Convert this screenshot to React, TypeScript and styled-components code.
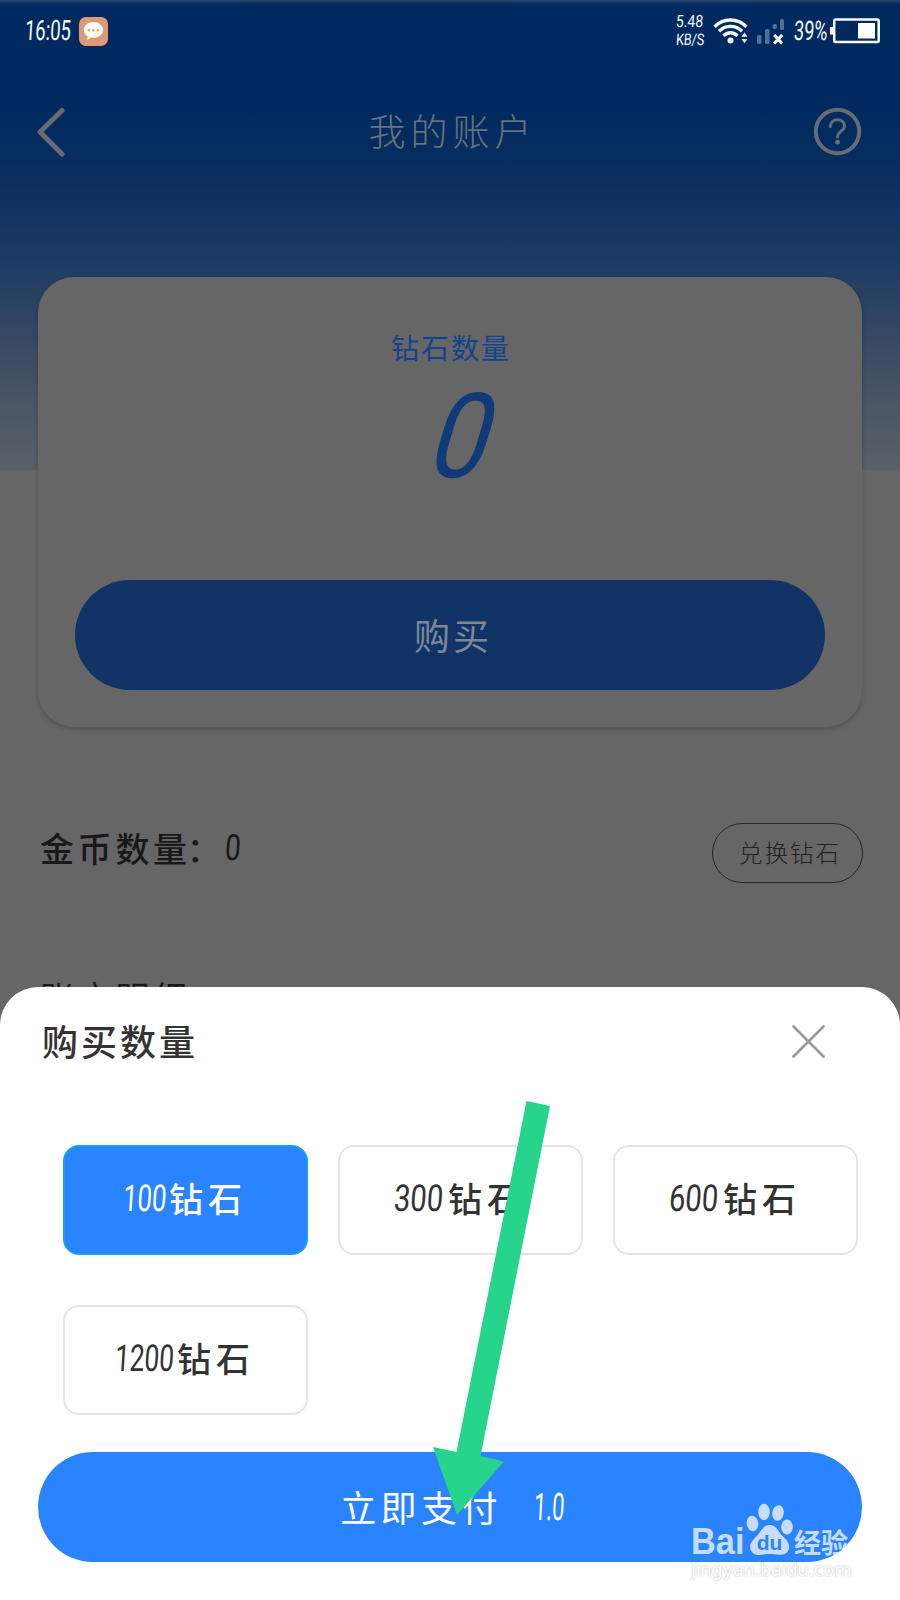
import React from "react";
import styled, { createGlobalStyle } from "styled-components";

const GlobalStyle = createGlobalStyle`
  * { box-sizing: border-box; }
  html, body { margin: 0; padding: 0; }
  body {
    width: 900px;
    height: 1600px;
    overflow: hidden;
    background: #666;
    font-family: "Noto Sans CJK SC", sans-serif;
  }
  button { font-family: inherit; padding: 0; margin: 0; border: 0; background: none; }
`;

const Screen = styled.div`
  position: relative;
  width: 900px;
  height: 1600px;
  overflow: hidden;
  display: flex;
  flex-direction: column;
  background: linear-gradient(
      #2a4568 0, #002a5f 4px, #002a5f 110px, #0b2f60 180px, #1c3b63 260px,
      #374963 340px, #4b5664 405px, #5a6067 470px
    )
    top / 100% 470px no-repeat #666;
`;

/* Condensed, slanted numerals; the box keeps the condensed width. */
const Numerals = styled.span<{ $size: number; $width: number; $squeeze: number; $slant?: number; $weight?: number }>`
  display: inline-block;
  flex: none;
  width: ${(p) => p.$width}px;
  font-family: Roboto, "Noto Sans", sans-serif;
  font-size: ${(p) => p.$size}px;
  font-weight: ${(p) => p.$weight ?? 400};
  line-height: 1;
  letter-spacing: 0;
  white-space: nowrap;
  transform-origin: left center;
  transform: scaleX(${(p) => p.$squeeze}) skewX(${(p) => -(p.$slant ?? 5)}deg);
`;

const StatusBar = styled.header`
  display: flex;
  align-items: center;
  justify-content: space-between;
  height: 62px;
  padding: 0 20px 0 25px;
  color: #f4fbff;
`;

const StatusGroup = styled.div`
  display: flex;
  align-items: center;
`;

const SignalSlot = styled.div`
  display: flex;
  padding: 0 9px 0 8px;
`;

const Speed = styled.div`
  display: flex;
  flex-direction: column;
  gap: 2px;
  width: 37px;
  padding-bottom: 1px;
`;

const NavBar = styled.nav`
  display: flex;
  align-items: center;
  justify-content: space-between;
  height: 139px;
  padding: 0 38px 0 36px;
`;

const NavTitle = styled.h1`
  margin: 0;
  padding: 0 0 2px 26px;
  color: #68727c;
  font-size: 37px;
  font-weight: 300;
  letter-spacing: 5px;
  line-height: 1;
`;

const BalanceCard = styled.section`
  display: flex;
  flex-direction: column;
  align-items: center;
  height: 450px;
  margin: 76px 38px 0 38px;
  padding: 53px 37px 37px;
  border-radius: 36px;
  background: #666;
  box-shadow: 0 2px 5px rgba(0, 0, 0, 0.22);
`;

const BalanceLabel = styled.div`
  padding-left: 2px;
  color: #12448b;
  font-size: 28px;
  font-weight: 400;
  letter-spacing: 2px;
  line-height: 34px;
`;

const BalanceValue = styled.div`
  display: flex;
  flex: 1;
  padding: 14px 0 0 4px;
  color: #113a78;
`;

const PillButton = styled.button<{ $dimmed?: boolean }>`
  display: flex;
  align-items: center;
  justify-content: center;
  width: 100%;
  height: 110px;
  flex: none;
  padding: ${(p) => (p.$dimmed ? "0 0 3px 6px" : "0 0 3px 2px")};
  border-radius: 55px;
  background: ${(p) => (p.$dimmed ? "#113366" : "#2a83ff")};
  color: ${(p) => (p.$dimmed ? "#7c8797" : "#fff")};
  font-size: 36px;
  line-height: 1;
  letter-spacing: ${(p) => (p.$dimmed ? 3 : 4.4)}px;
`;

const CoinRow = styled.section`
  display: flex;
  align-items: center;
  justify-content: space-between;
  height: 60px;
  margin-top: 96px;
  padding: 0 37px 0 40px;
`;

const CoinText = styled.div`
  display: flex;
  align-items: center;
  color: #191919;
  font-size: 34px;
  font-weight: 500;
  letter-spacing: 3.7px;
  line-height: 1;
  padding-bottom: 11px;
`;

const Colon = styled.span`
  width: 38px;
  margin-left: -4px;
`;

const ExchangeButton = styled.button`
  width: 151px;
  height: 60px;
  padding: 0 0 1px 5px;
  border: 1.5px solid #262626;
  border-radius: 30px;
  color: #222;
  font-size: 23.5px;
  font-weight: 300;
  letter-spacing: 2px;
  line-height: 1;
`;

const DetailHeading = styled.h2`
  margin: 94px 0 0 40px;
  color: #191919;
  font-size: 34px;
  font-weight: 400;
  letter-spacing: 3.7px;
  line-height: 40px;
`;

const Sheet = styled.section`
  position: absolute;
  inset: 987px 0 0;
  padding: 0 38px;
  border-radius: 38px 38px 0 0;
  background: #fff;
`;

const SheetHeader = styled.div`
  display: flex;
  align-items: center;
  justify-content: space-between;
  height: 108px;
  padding: 0 37px 0 4px;
`;

const SheetTitle = styled.h2`
  margin: 0;
  padding-bottom: 2px;
  color: #333;
  font-size: 36px;
  font-weight: 500;
  letter-spacing: 3px;
  line-height: 1;
`;

const Options = styled.div`
  display: grid;
  grid-template-columns: repeat(3, 245px);
  grid-auto-rows: 110px;
  gap: 50px 30px;
  padding: 50px 0 37px 24.5px;
`;

const Option = styled.button<{ $selected?: boolean }>`
  display: flex;
  align-items: center;
  justify-content: center;
  padding-bottom: 4px;
  border: 2px solid ${(p) => (p.$selected ? "#16a0f4" : "#e5e5e5")};
  border-radius: 16px;
  background: ${(p) => (p.$selected ? "#2a83ff" : "#fff")};
  color: ${(p) => (p.$selected ? "#fff" : "#333")};
  font-size: 34px;
  font-weight: 500;
  letter-spacing: 5px;
  line-height: 1;
`;

const Amount = styled.span`
  margin-left: 32px;
`;

const Arrow = styled.svg`
  position: absolute;
  left: 433px;
  top: 1101px;
`;

const Watermark = styled.div`
  position: absolute;
  left: 691px;
  top: 1503px;
  width: 164px;
  color: rgba(255, 255, 255, 0.74);
`;

const WatermarkBrand = styled.div`
  display: flex;
  align-items: flex-end;
  height: 53px;
`;

const Bai = styled.span`
  width: 54px;
  margin-bottom: -4px;
  font: 700 37px/36px "Liberation Sans", sans-serif;
  transform: scaleX(0.93);
  transform-origin: left;
`;

const Jingyan = styled.span`
  margin-bottom: 1px;
  font-size: 27px;
  font-weight: 700;
  line-height: 26px;
`;

const WatermarkUrl = styled.div`
  margin-top: 4px;
  font: 18px/20px "DejaVu Sans", sans-serif;
  letter-spacing: -0.35px;
  color: #fff;
  text-shadow: 0 0 2px rgba(0, 0, 0, 0.32);
  white-space: nowrap;
`;

const packs = [
  { count: "100", width: 46, squeeze: 0.7 },
  { count: "300", width: 54, squeeze: 0.79 },
  { count: "600", width: 54, squeeze: 0.79 },
  { count: "1200", width: 62, squeeze: 0.71 },
];

const ChatIcon = () => (
  <svg width="29" height="29" viewBox="0 0 29 29">
    <rect width="29" height="29" rx="7" fill="#dd9a76" />
    <path d="M14.4 5c5.400 0 9.600 3.500 9.600 8s-4.200 7.800-9.600 7.800c-.9 0-1.700-.1-2.500-.3-1 1.200-2.600 2.100-4.300 2.200.8-.9 1.200-1.900 1.100-3.200C6.300 18 4.800 15.700 4.800 13c0-4.500 4.200-8 9.600-8z" fill="#fffaf0" />
    <circle cx="9.700" cy="13.200" r="1.300" fill="#d8a587" />
    <circle cx="14.400" cy="13.200" r="1.300" fill="#d8a587" />
    <circle cx="19.100" cy="13.200" r="1.300" fill="#d8a587" />
  </svg>
);

const WifiIcon = () => (
  <svg width="36" height="27" viewBox="0 0 36 27" fill="none" stroke="#f4fbff" strokeWidth="3.400">
    <path d="M1.500 8.800C10.500-.2 24.500-.2 33.500 8.800" />
    <path d="M6 13.300c6.600-6.600 16.400-6.600 23 0" />
    <path d="M10.500 17.800c4-4 10-4 14 0" />
    <circle cx="17.500" cy="22.500" r="3" fill="#f4fbff" stroke="none" />
    <path d="M28.500 18.800l3-4.300 3 4.300zM28.500 21l3 4.300 3-4.300z" fill="#f4fbff" stroke="none" />
  </svg>
);

const SignalIcon = () => (
  <svg width="28" height="27" viewBox="0 0 28 27">
    <g fill="#4d6f9c">
      <rect x="0" y="17" width="4.500" height="9" rx="1.500" />
      <rect x="8" y="11" width="4.500" height="15" rx="1.500" />
      <rect x="15.500" y="6" width="4.500" height="5" rx="2" />
      <rect x="23" y="1" width="4" height="11" rx="1.500" />
    </g>
    <path d="M17.200 17l8 8.500M25.200 17l-8 8.500" stroke="#f4fbff" strokeWidth="3.200" />
  </svg>
);

const BatteryIcon = () => (
  <svg width="50" height="26" viewBox="0 0 50 26">
    <rect x="4.200" y="1.500" width="44.500" height="22.500" rx="1.500" fill="none" stroke="#fff" strokeWidth="2.500" />
    <rect x="0" y="9" width="4" height="7.500" fill="#fff" />
    <rect x="28" y="5" width="17" height="15.500" fill="#fff" />
  </svg>
);

const BackIcon = () => (
  <svg width="30" height="50" viewBox="0 0 30 50">
    <path d="M26 3.500 4 25l22 22" fill="none" stroke="#656b70" strokeWidth="5" strokeLinecap="round" strokeLinejoin="round" />
  </svg>
);

const HelpIcon = () => (
  <svg width="49" height="49" viewBox="0 0 49 49" fill="none" stroke="#666c73">
    <circle cx="24.500" cy="24.500" r="21.700" strokeWidth="4" />
    <path d="M17.300 19.500c0-4.200 3-6.700 7.200-6.700s7 2.500 7 6.200c0 5-7 5.500-7 11" strokeWidth="3" strokeLinecap="round" />
    <circle cx="24.500" cy="35" r="2.500" fill="#666c73" stroke="none" />
  </svg>
);

const CloseIcon = () => (
  <svg width="33" height="33" viewBox="0 0 33 33">
    <path d="M1.500 1.500l30 30M31.500 1.500l-30 30" stroke="#999" strokeWidth="2.600" strokeLinecap="round" />
  </svg>
);

const PawIcon = () => (
  <svg width="49" height="53" viewBox="0 0 49 53" fill="#c7dcff">
    <ellipse cx="7.500" cy="20.500" rx="5.800" ry="7.700" transform="rotate(-8 7.500 20.500)" />
    <ellipse cx="19" cy="9" rx="5.800" ry="8.200" />
    <ellipse cx="33" cy="10" rx="5.800" ry="7.800" transform="rotate(10 33 10)" />
    <ellipse cx="42" cy="24" rx="5.800" ry="7.500" />
    <path d="M24.500 22c7 0 8.500 6.500 13 11 4 3.800 7.500 7.500 6.500 12.500-1.300 5.500-6 6.500-10 6.300-3.500-.2-5.500-.8-9.500-.8s-6 .9-9.500 1c-4.500.1-9-1.500-9.800-7-.6-5 3-8.500 6.800-12.300 4.500-4.500 5.800-10.700 12.500-10.700z" />
    <text x="24.500" y="47" textAnchor="middle" fontFamily="Liberation Sans, sans-serif" fontWeight="700" fontSize="21" fill="#2a83ff">du</text>
  </svg>
);

export default function App() {
  return (
    <Screen>
      <GlobalStyle />
      <StatusBar>
        <StatusGroup>
          <Numerals $size={28} $width={54} $squeeze={0.66}>16:05</Numerals>
          <ChatIcon />
        </StatusGroup>
        <StatusGroup>
          <Speed>
            <Numerals $size={17} $width={28} $squeeze={0.82}>5.48</Numerals>
            <Numerals $size={16} $width={28} $squeeze={0.78}>KB/S</Numerals>
          </Speed>
          <WifiIcon />
          <SignalSlot>
            <SignalIcon />
          </SignalSlot>
          <Numerals $size={27} $width={36} $squeeze={0.67}>39%</Numerals>
          <BatteryIcon />
        </StatusGroup>
      </StatusBar>

      <NavBar>
        <BackIcon />
        <NavTitle>我的账户</NavTitle>
        <HelpIcon />
      </NavBar>

      <BalanceCard>
        <BalanceLabel>钻石数量</BalanceLabel>
        <BalanceValue>
          <Numerals $size={118} $width={58} $squeeze={0.88} $slant={19}>0</Numerals>
        </BalanceValue>
        <PillButton $dimmed>购买</PillButton>
      </BalanceCard>

      <CoinRow>
        <CoinText>
          金币数量<Colon>：</Colon>
          <Numerals $size={36} $width={20} $squeeze={0.78}>0</Numerals>
        </CoinText>
        <ExchangeButton>兑换钻石</ExchangeButton>
      </CoinRow>
      <DetailHeading>账户明细</DetailHeading>

      <Sheet>
        <SheetHeader>
          <SheetTitle>购买数量</SheetTitle>
          <CloseIcon />
        </SheetHeader>
        <Options>
          {packs.map((pack, i) => (
            <Option key={pack.count} $selected={i === 0}>
              <Numerals $size={37} $width={pack.width} $squeeze={pack.squeeze}>{pack.count}</Numerals>
              钻石
            </Option>
          ))}
        </Options>
        <PillButton>
          立即支付
          <Amount>
            <Numerals $size={38} $width={28} $squeeze={0.58}>1.0</Numerals>
          </Amount>
        </PillButton>
      </Sheet>

      <Arrow width="118" height="415" viewBox="0 0 118 415">
        <path d="M93.500 0 117 5 47.500 355 71 360.500 24 414 0 346 23.500 351z" fill="#26d48c" />
      </Arrow>

      <Watermark>
        <WatermarkBrand>
          <Bai>Bai</Bai>
          <PawIcon />
          <Jingyan>经验</Jingyan>
        </WatermarkBrand>
        <WatermarkUrl>jingyan.baidu.com</WatermarkUrl>
      </Watermark>
    </Screen>
  );
}
